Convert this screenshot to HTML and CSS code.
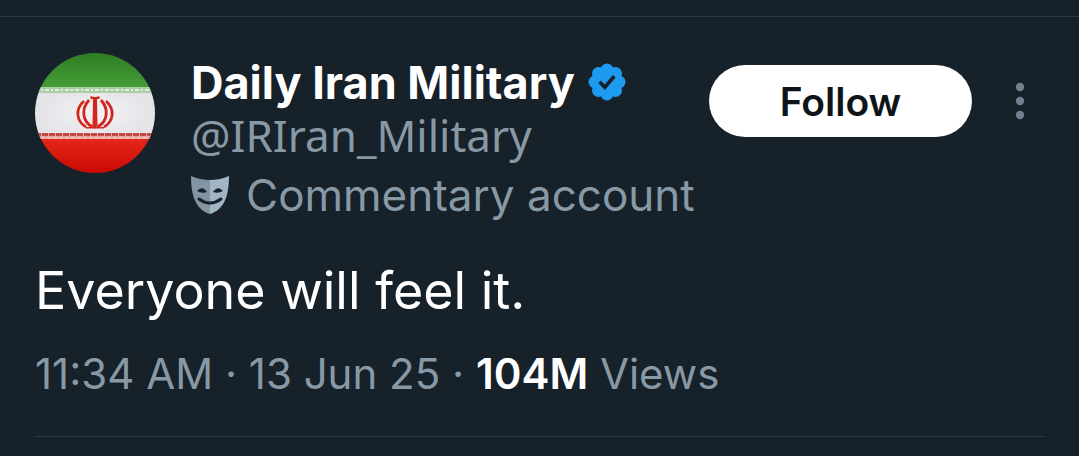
FILE: index.html
```html
<!DOCTYPE html>
<html lang="en">
<head>
    <meta charset="UTF-8">
    <meta name="viewport" content="width=device-width, initial-scale=1.0">
    <title>Daily Iran Military</title>
    <link rel="stylesheet" href="styles.css">
</head>
<body>
    <article class="post">
        <header class="post-header">
            <svg class="avatar" viewBox="0 0 120 120" role="img" aria-label="Daily Iran Military">
                <defs>
                    <clipPath id="round"><circle cx="60" cy="60" r="60"/></clipPath>
                    <linearGradient id="green" x1="0" y1="0" x2="0" y2="1">
                        <stop offset="0" stop-color="#2f7d22"/>
                        <stop offset="1" stop-color="#459d38"/>
                    </linearGradient>
                    <linearGradient id="red" x1="0" y1="0" x2="0" y2="1">
                        <stop offset="0" stop-color="#e6281a"/>
                        <stop offset="1" stop-color="#c80a04"/>
                    </linearGradient>
                    <radialGradient id="white">
                        <stop offset="0" stop-color="#f3f2f4"/>
                        <stop offset="1" stop-color="#e4e3e7"/>
                    </radialGradient>
                </defs>
                <g clip-path="url(#round)">
                    <rect y="34" width="120" height="52" fill="url(#white)"/>
                    <rect width="120" height="35" fill="url(#green)"/>
                    <rect y="84" width="120" height="36" fill="url(#red)"/>
                    <rect y="34" width="120" height="6" fill="#a9cda4"/>
                    <path d="M0 37H120" stroke="#e0ecdf" stroke-width="2" stroke-dasharray="4 2 2 2"/>
                    <rect y="80" width="120" height="6" fill="#eba49e"/>
                    <path d="M0 81.500H120" stroke="#b93a35" stroke-width="2.500" stroke-dasharray="6 1"/>
                    <path d="M0 85H120" stroke="#f0c9c6" stroke-width="1.500" stroke-dasharray="4 2"/>
                    <g fill="#d3261f">
                        <path d="M55.500 43Q60 45 64.500 43V46H62L62.500 72L60 76L57.500 72L58 46H55.500Z"/>
                        <path d="M51 74H69V75.500H51Z"/>
                    </g>
                    <g fill="none" stroke="#d3261f" stroke-width="2.800">
                        <path d="M54 47C46 56 47 69 58 74"/>
                        <path d="M66 47C74 56 73 69 62 74"/>
                        <path d="M49 48C40 56 41 68 51 74"/>
                        <path d="M71 48C80 56 79 68 69 74"/>
                    </g>
                </g>
            </svg>
            <div class="author">
                <div class="name-row">
                    <span class="name">Daily Iran Military</span>
                    <svg class="badge" viewBox="0 0 38 38" role="img" aria-label="Verified account">
                        <g fill="#1d9bf0">
                            <circle cx="19" cy="19" r="15"/>
                            <circle cx="19" cy="7" r="6.500"/>
                            <circle cx="27.500" cy="10.500" r="6.500"/>
                            <circle cx="31" cy="19" r="6.500"/>
                            <circle cx="27.500" cy="27.500" r="6.500"/>
                            <circle cx="19" cy="31" r="6.500"/>
                            <circle cx="10.500" cy="27.500" r="6.500"/>
                            <circle cx="7" cy="19" r="6.500"/>
                            <circle cx="10.500" cy="10.500" r="6.500"/>
                        </g>
                        <path d="M11.500 18.800L16.800 24.300L26.300 13.300" fill="none" stroke="#17212a" stroke-width="3.600"/>
                    </svg>
                </div>
                <div class="handle">@IRIran_Military</div>
                <div class="label-row">
                    <svg class="mask" viewBox="0 0 38 38" aria-hidden="true">
                        <path d="M0 0Q9 4 19 4V38C6 34 0 22 0 0Z" fill="#8395a3"/>
                        <path d="M38 0Q29 4 19 4V38C32 34 38 22 38 0Z" fill="#a2b5c3"/>
                        <path d="M6 15Q11 9 16 16Q11 18 6 15ZM32 15Q27 9 22 16Q27 18 32 15Z" fill="#17212a"/>
                        <path d="M8 23Q19 31 30 23" fill="none" stroke="#17212a" stroke-width="3" stroke-linecap="round"/>
                    </svg>
                    <span>Commentary account</span>
                </div>
            </div>
            <button type="button" class="follow">Follow</button>
            <button type="button" class="more" aria-label="More options">
                <svg viewBox="0 0 10 38" fill="#71808e">
                    <circle cx="5" cy="5" r="4.200"/>
                    <circle cx="5" cy="19" r="4.200"/>
                    <circle cx="5" cy="33" r="4.200"/>
                </svg>
            </button>
        </header>
        <p class="text">Everyone will feel it.</p>
        <div class="meta">11:34 AM · 13 Jun 25 · <strong>104M</strong> Views</div>
    </article>
</body>
</html>
```
FILE: styles.css
```css
* {
    box-sizing: border-box;
}
body {
    margin: 0;
    background-color: #17212a;
    color: #8899a6;
    font-family: Inter, sans-serif;
    font-size: 44px;
}
.post {
    margin-top: 16px;
    padding: 36px 35px 0 35px;
    border-top: 1px solid #2f3942;
}
.post-header {
    display: flex;
    align-items: flex-start;
}
.avatar {
    width: 120px;
    height: 120px;
    flex: none;
}
.author {
    flex: 1;
    min-width: 0;
    margin-left: 36px;
    white-space: nowrap;
}
.name-row {
    display: flex;
    align-items: center;
    gap: 13px;
    height: 58px;
}
.name {
    color: #fff;
    font-size: 45px;
    font-weight: 700;
}
.badge {
    width: 38px;
    height: 38px;
}
.handle {
    font-family: "Noto Sans", sans-serif;
    line-height: 48px;
}
.label-row {
    display: flex;
    align-items: center;
    gap: 17px;
    line-height: 72px;
}
.mask {
    width: 38px;
    height: 38px;
}
.follow {
    width: 263px;
    height: 72px;
    margin-top: 12px;
    padding: 0;
    border: none;
    border-radius: 36px;
    background-color: #fff;
    color: #0f1419;
    font-family: Inter, sans-serif;
    font-size: 39px;
    font-weight: 600;
    cursor: pointer;
}
.more {
    width: 48px;
    height: 72px;
    margin: 12px 0 0 24px;
    padding: 0;
    border: none;
    background: none;
    cursor: pointer;
}
.more svg {
    display: block;
    width: 10px;
    height: 38px;
    margin: 0 auto;
}
.text {
    margin: 24px 0 0;
    color: #fff;
    font-size: 52px;
    line-height: 72px;
}
.meta {
    padding: 15px 0 30px;
    border-bottom: 1px solid #2f3942;
    font-size: 42px;
    line-height: 64px;
}
.meta strong {
    color: #fff;
    font-weight: 600;
}
```
